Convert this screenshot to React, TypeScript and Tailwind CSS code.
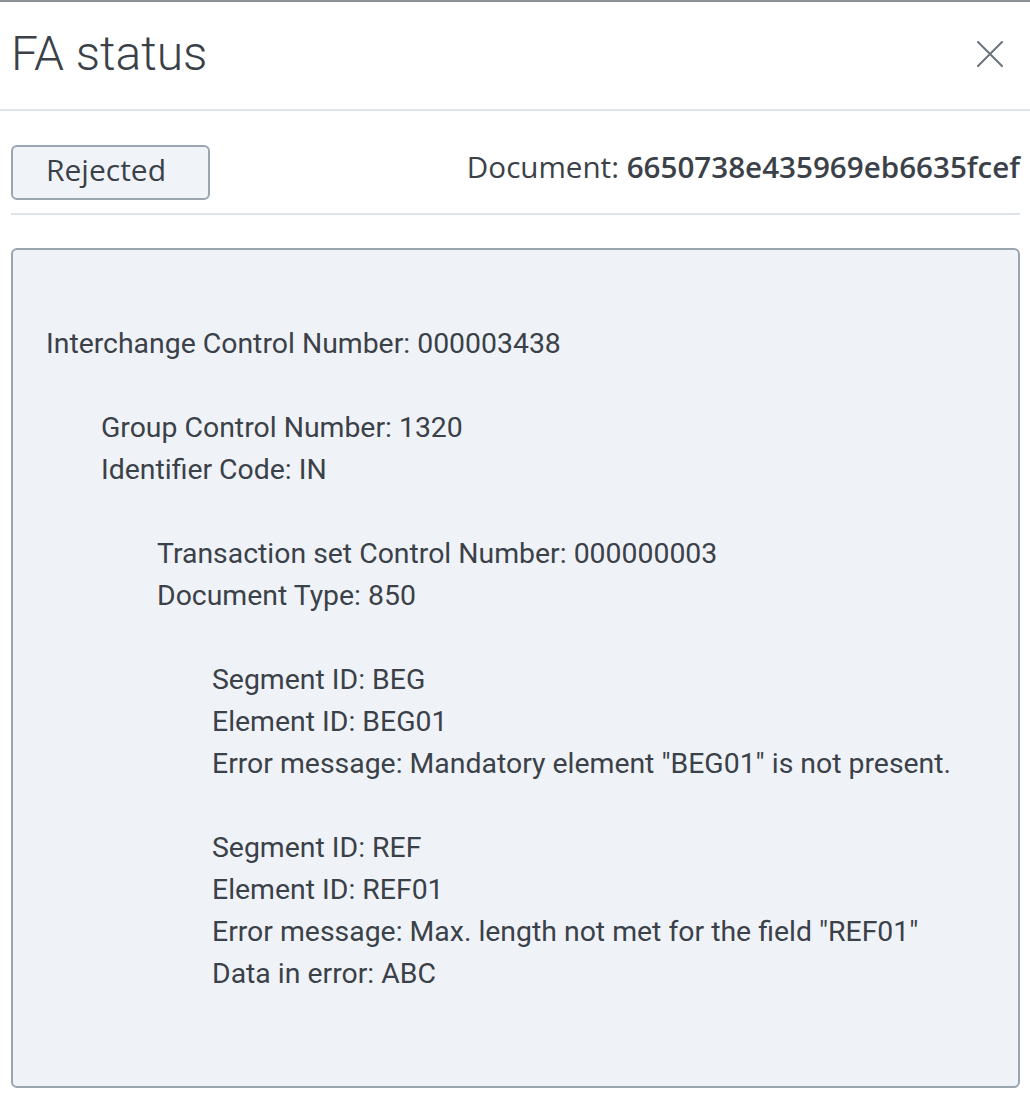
import React from 'react';

const lines: { level: number; text: string }[][] = [
  [{ level: 0, text: 'Interchange Control Number: 000003438' }],
  [
    { level: 1, text: 'Group Control Number: 1320' },
    { level: 1, text: 'Identifier Code: IN' },
  ],
  [
    { level: 2, text: 'Transaction set Control Number: 000000003' },
    { level: 2, text: 'Document Type: 850' },
  ],
  [
    { level: 3, text: 'Segment ID: BEG' },
    { level: 3, text: 'Element ID: BEG01' },
    { level: 3, text: 'Error message: Mandatory element "BEG01" is not present.' },
  ],
  [
    { level: 3, text: 'Segment ID: REF' },
    { level: 3, text: 'Element ID: REF01' },
    { level: 3, text: 'Error message: Max. length not met for the field "REF01"' },
    { level: 3, text: 'Data in error: ABC' },
  ],
];

const indent = ['pl-0', 'pl-[55px]', 'pl-[111px]', 'pl-[166px]'];

const App: React.FC = () => {
  return (
    <div className="w-[1030px] h-[1100px] bg-white border-t-2 border-[#8a9199] text-[#3b4148]">
      {/* header */}
      <div className="h-[109px] flex items-center justify-between pl-[11px] pr-[27px] border-b-2 border-[#dde3e8]">
        <h1 className="font-['Roboto',sans-serif] font-light text-[48px] leading-none pb-[4px]">FA status</h1>
        <svg width="26" height="26" viewBox="0 0 26 26" className="text-[#6b737b] mb-[4px]">
          <path d="M1 1L25 25M25 1L1 25" stroke="currentColor" strokeWidth="2" strokeLinecap="round" fill="none" />
        </svg>
      </div>

      <div className="px-[11px] pr-[10px]">
        <div className="flex items-center justify-between pt-[34px] pb-[13px] border-b-2 border-[#dde3e8] font-['Open_Sans',sans-serif]">
          <button className="w-[199px] h-[55px] rounded-[6px] border-2 border-[#9aa5b1] bg-[#f0f4f8] text-[30px] text-left pl-[33px] pb-[6px]">
            Rejected
          </button>
          <div className="text-[29.6px] mb-[10px]">
            Document: <span className="font-semibold">6650738e435969eb6635fcef</span>
          </div>
        </div>

        <div className="mt-[33px] h-[840px] rounded-[6px] border-2 border-[#9aa5b1] bg-[#eff3f8] pt-[73px] pl-[33px] font-['Roboto',sans-serif] text-[28.4px] leading-[42px]">
          {lines.map((group, i) => (
            <div key={i} className={i > 0 ? 'mt-[42px]' : ''}>
              {group.map((l, j) => (
                <div key={j} className={indent[l.level]}>
                  {l.text}
                </div>
              ))}
            </div>
          ))}
        </div>
      </div>
    </div>
  );
};

export default App;
